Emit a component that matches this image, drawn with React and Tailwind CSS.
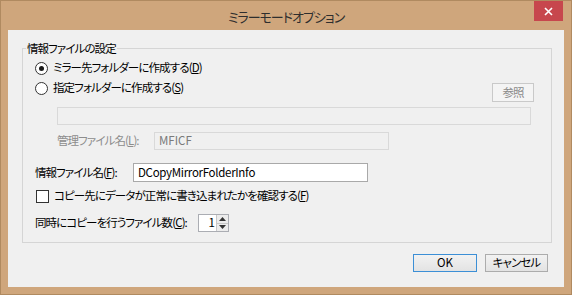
export default function App() {
  const font = "font-['Meiryo_UI','Noto_Sans_CJK_JP',sans-serif] [font-feature-settings:'palt']";
  return (
    <div className={`w-[572px] h-[295px] bg-[#cfa67c] border border-[#b08a60] flex flex-col relative ${font} text-[11.5px] tracking-[-0.9px] text-black leading-none whitespace-nowrap`}>
      <div className="h-[29px] flex items-center justify-center pt-[2px]">
        <span className="text-[13px] tracking-[-1px] text-[#2e2e2e]">ミラーモードオプション</span>
      </div>
      <div className="absolute top-0 right-[8px] w-[29px] h-[20px] bg-[#c7474d] flex items-center justify-center">
        <svg width="9" height="9" viewBox="0 0 9 9">
          <path d="M1 1 L8 8 M8 1 L1 8" stroke="#fff" strokeWidth="1.6" />
        </svg>
      </div>
      <div className="flex-1 mx-[7px] mb-[7px] bg-[#f0f0f0] flex flex-col">
        <fieldset className="mt-[10px] ml-[14px] mr-[12px] border border-[#d5d5d5] p-0 pb-[10px]">
          <legend className="ml-[3px] px-[1px] leading-[16px] h-[16px]">情報ファイルの設定</legend>
          <div className="flex items-center h-[20px] mt-[2px] ml-[12px] gap-[5px]">
            <div className="w-[13px] h-[13px] rounded-full border border-[#333] bg-white flex items-center justify-center shrink-0">
              <div className="w-[5px] h-[5px] rounded-full bg-[#1a1a1a]" />
            </div>
            <span>ミラー先フォルダーに作成する(<span className="underline">D</span>)</span>
          </div>
          <div className="flex items-start justify-between ml-[12px] mr-[17px]">
            <div className="flex items-center h-[20px] gap-[5px]">
              <div className="w-[13px] h-[13px] rounded-full border border-[#333] bg-white shrink-0" />
              <span>指定フォルダーに作成する(<span className="underline">S</span>)</span>
            </div>
            <div className="mt-[5px] w-[42px] h-[19px] border border-[#c9c9c9] bg-[#f4f4f4] flex items-center justify-center text-[#8a8a8a]">
              参照
            </div>
          </div>
          <div className="mt-[5px] ml-[34px] w-[474px] h-[18px] border border-[#d9d9d9] bg-[#f0f0f0]" />
          <div className="mt-[7px] ml-[34px] h-[18px] flex items-center">
            <span className="w-[97px] shrink-0 text-[#8d8d8d]">管理ファイル名(<span className="underline">L</span>):</span>
            <div className="w-[235px] h-[18px] border border-[#d9d9d9] bg-[#f0f0f0] flex items-center pl-[4px] text-[#7a7a7a] tracking-normal">MFICF</div>
          </div>
          <div className="mt-[13px] ml-[12px] h-[19px] flex items-center">
            <span className="w-[98px] shrink-0">情報ファイル名(<span className="underline">F</span>):</span>
            <div className="w-[235px] h-[19px] border border-[#a9a9a9] bg-white flex items-center pl-[4px] tracking-[-0.3px]">DCopyMirrorFolderInfo</div>
          </div>
          <div className="mt-[4px] ml-[13px] h-[20px] flex items-center gap-[5px]">
            <div className="w-[13px] h-[13px] border border-[#333] bg-white shrink-0" />
            <span>コピー先にデータが正常に書き込まれたかを確認する(<span className="underline">F</span>)</span>
          </div>
          <div className="mt-[8px] ml-[12px] h-[18px] flex items-center">
            <span className="w-[163px] shrink-0">同時にコピーを行うファイル数(<span className="underline">C</span>):</span>
            <div className="w-[31px] h-[18px] border border-[#abadb3] bg-white flex shrink-0">
              <div className="flex-1 flex items-center justify-end pr-[2px]">1</div>
              <div className="w-[12px] flex flex-col border-l border-[#c8c8c8] bg-[#ececec]">
                <div className="flex-1 flex items-center justify-center border-b border-[#c8c8c8]">
                  <svg width="7" height="4" viewBox="0 0 7 4"><path d="M0 4 L3.5 0 L7 4 Z" fill="#333" /></svg>
                </div>
                <div className="flex-1 flex items-center justify-center">
                  <svg width="7" height="4" viewBox="0 0 7 4"><path d="M0 0 L3.5 4 L7 0 Z" fill="#333" /></svg>
                </div>
              </div>
            </div>
          </div>
        </fieldset>
        <div className="mt-[11px] mr-[16px] flex justify-end gap-[8px]">
          <div className="w-[64px] h-[18px] border border-[#3c8fd6] bg-gradient-to-b from-[#f2f2f2] to-[#e3e3e3] flex items-center justify-center tracking-normal">OK</div>
          <div className="w-[63px] h-[18px] border border-[#acacac] bg-gradient-to-b from-[#f2f2f2] to-[#e3e3e3] flex items-center justify-center">キャンセル</div>
        </div>
      </div>
    </div>
  );
}
